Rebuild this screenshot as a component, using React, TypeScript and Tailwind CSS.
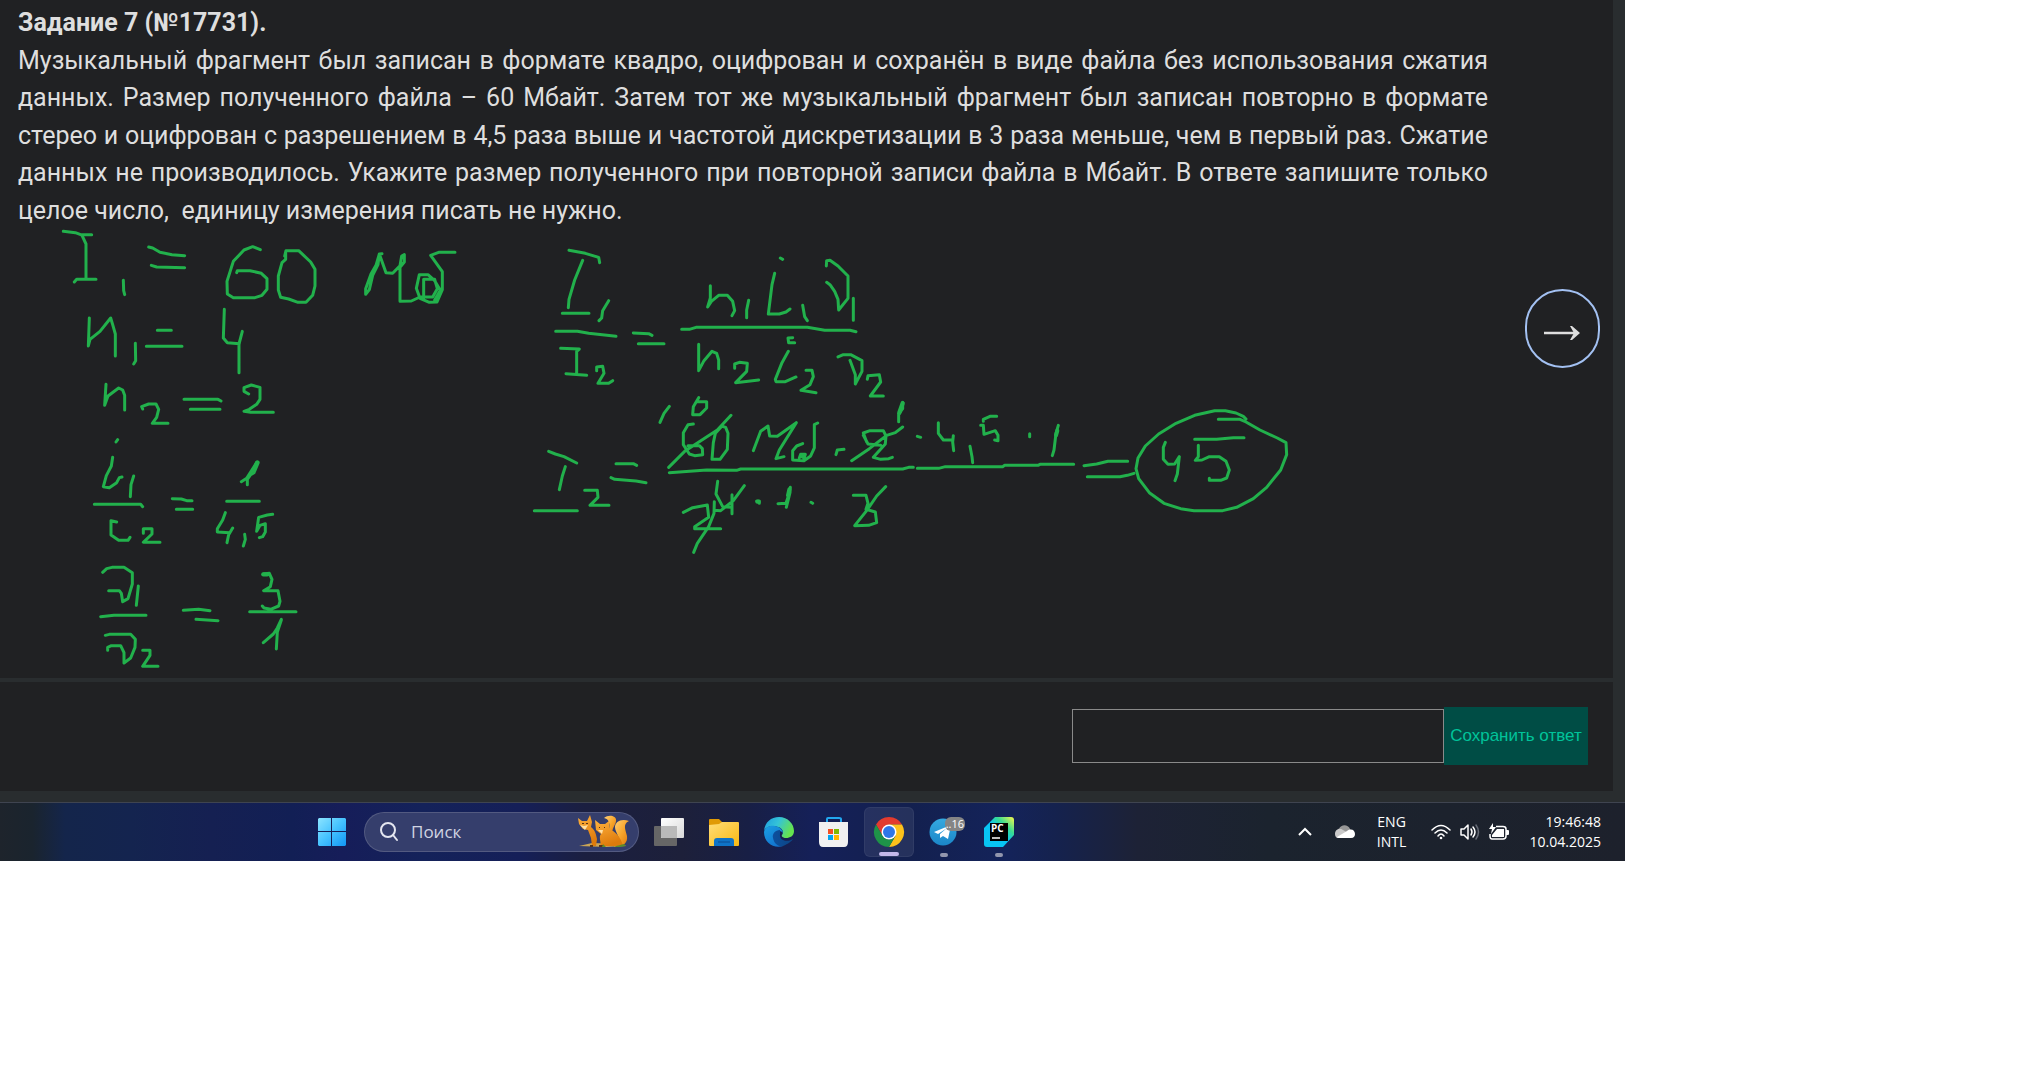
import React from "react";

const Stroke = ({ d, w = 3 }: { d: string; w?: number }) => <path d={d} strokeWidth={w} />;

/* Groups are drawn in units of a third of a pixel. */
function Ink() {
  return (
    <svg
      aria-hidden="true"
      className="pointer-events-none absolute left-0 top-0 h-[678px] w-[1613px]"
      viewBox="0 0 1613 678"
      fill="none"
      stroke="#22b14c"
      strokeLinecap="round"
      strokeLinejoin="round"
    >
      <g transform="translate(40 220) scale(.33333)">
        <Stroke w={9} d="M70 34L106 38L122 44H155M126 46L138 72V178M103 186L110 178H168M250 181L251 212L254 224M326 81L338 84L360 97L396 104L434 107M334 136L350 141L434 143" />
        <Stroke w={9} d="M661 89L638 80L612 90L580 124L561 184L562 222L580 233H645L666 226L681 208V176L664 160L630 152H592L590 158" />
        <Stroke w={9} d="M734 108L738 92H776L812 126L825 148V198L818 226L798 247H774L746 237L722 232L715 210V168L726 128L737 118V98" />
        <Stroke w={9} d="M1026 101L1018 102L1008 136L993 162L977 206V223L988 209L998 166L1014 134L1018 102L1038 158L1058 160L1080 137L1085 108L1093 104V126L1080 142V244L1114 243L1140 231H1178L1192 206L1184 178H1151V234M1245 97H1196L1172 106L1207 155V209L1191 246L1168 247L1140 235L1129 205L1138 164H1164L1184 182L1201 211L1184 240" />
        <Stroke w={9} d="M148 294L145 378L150 358L180 334L212 294L218 314L226 342V408M352 331H394M319 379H426M286 370L287 422L281 432M553 268L550 354L562 368L598 371M607 334L597 372V458" />
        <Stroke w={9} d="M198 493L194 556L204 528L236 504L248 510L254 526V570M308 567L305 560L326 552H348L356 568L350 592L337 610H384M432 538H534L543 543M451 568H540M626 522L612 514V503L634 495L660 502V538L650 553L628 568L612 574L632 577H700M228 666L233 659" />
      </g>
      <g transform="translate(40 430) scale(.33333)">
        <Stroke w={9} d="M218 82L214 108L199 137L190 170L208 173L230 158L238 143L246 141M281 138L273 164L271 200M163 223H302L308 230M230 276L213 272V315L236 331H264L270 322M310 310V296H336V312L310 337H360M397 206L424 207L440 212H456M409 238H458" />
        <Stroke w={9} d="M604 155L620 145L650 98M642 128L632 134L622 148V164" />
        <Stroke w={14} d="M652 98L642 122" />
        <Stroke w={9} d="M560 214H658M556 248L548 270L532 296V306L569 308M578 294L566 314L561 338M614 313L616 328L610 348M698 253L682 255L656 262L650 304L660 286L676 281V306L668 320L658 323M188 427L200 416L216 412H252L277 428V462L264 506L248 515L244 490L238 482H206M295 468L289 526M182 560L222 556H318M196 616L208 613H272L286 628L285 652L272 684L252 699V668L242 647H214L203 652V661M308 661H330V676L308 709H354" />
        <Stroke w={9} d="M430 541L476 538L510 542M468 568L534 572M670 432L688 430L696 448L691 470L671 482H714L720 514L716 528L692 538L672 534L667 528M629 545H768M670 638L700 612L712 594L724 568M724 570L712 606L709 657" />
        <Stroke w={13} d="M670 433H682" />
      </g>
      <g transform="translate(520 230) scale(.33333)">
        <Stroke w={9} d="M147 61L196 70L236 82L239 98M188 91L164 150L147 208L145 233M127 250H207M266 212L248 242L245 264L237 272M107 304H172L206 310L288 319M122 355L178 357L170 364V432M138 431L200 436M230 422V411L248 409L252 430L234 460H266L278 452M340 309L386 311L396 316M355 341H432" />
        <Stroke w={9} d="M571 167V204L563 231L574 214L596 196H622L638 214L644 242L636 257M686 211L680 240V263M764 130L756 164L745 252H778L798 246L810 237M781 84L788 88M848 226L854 260L862 272M919 108L920 92L930 91L954 108L984 138V205L956 240L954 208L944 184L930 164L920 157M1000 205V271M485 298H508L528 292H862L914 301H990L1008 305" />
        <Stroke w={9} d="M536 343V422L552 392L576 364L590 370L596 390V416M644 415V402L658 397L682 400L680 424L647 458L716 450M818 323L804 324L806 338H824M805 364L786 398L766 448L768 455H796L828 441M858 421H876L880 440L870 464L843 481L888 488M954 381L970 374H992L1026 392V424L1006 462V434L990 391M1042 448L1044 437L1078 434L1082 456L1051 498H1090" />
        <Stroke w={9} d="M448 529L432 550L420 577M536 503L520 530L518 554H540L560 534V515H530M520 582L504 584L490 608V644L508 672L524 677L548 674L547 656L538 647H504M446 712L494 664L592 600L633 556M604 590L586 610L580 638L576 688H600L622 658L624 610L617 592L604 588M700 662L722 604L744 588L749 618L772 619L829 578L778 660L768 686L792 680M893 579L883 584V654L872 678L852 692L818 690V662L830 648L848 641M838 684L842 673H856L852 686M948 674L952 660L972 658" />
        <Stroke w={9} d="M1040 636L1030 609L1050 602H1090L1098 618L1096 642L1060 682L1082 688L1106 686L1117 682M1030 616L1044 642L1082 646M995 692L1048 656L1100 616L1126 608L1148 591M448 728L560 720L650 721L662 717H1148L1166 712H1180M1148 517V536L1136 552V575" />
        <Stroke w={13} d="M1148 520L1138 548" />
        <Stroke w={9} d="M86 664L106 672L132 680L170 699M136 710L127 738L118 779M43 842H172M194 781H232L234 802L210 826H267M288 701H340L350 706M273 743L284 748L348 753L378 758" />
        <Stroke w={9} d="M490 847L518 833L562 825L566 862L524 890V896H602M583 815L582 850L566 890L532 940L521 967M593 754L588 792L608 830L634 832M636 794V851M583 841L602 842L640 812L673 767M710 813H718V820M774 821L798 820L806 796L811 772L810 788L799 832M873 817L878 820M1000 796H1038L1044 820L1038 838L1066 846L1070 878L1046 886L1004 887L1040 842L1070 798L1097 770" />
        <Stroke w={12} d="M712 815H716M808 778L804 796M848 680H852" />
      </g>
      <g transform="translate(880 380) scale(.33333)">
        <Stroke w={9} d="M112 169L122 172M175 128V160L190 180H217M220 167L218 186L221 212M270 199L276 230L278 248M350 109H330L310 118V124M302 136H310L312 163L346 152L354 166V182L344 180M449 161V170M535 136L528 160L522 210L517 227M112 265H176L196 260H368L374 256H474L480 253H581M612 257L650 252L684 244H743M622 290H720L742 286L762 280" />
        <Stroke w={12} d="M532 152L528 166" />
        <Stroke w={9} d="M1015 118H1080L1098 126L1140 150L1192 174L1218 188L1220 224L1202 270L1160 322L1120 356L1070 382L1028 392H942L902 386L852 370L808 338L776 296L768 266L774 234L796 198L836 162L888 130L944 106L1004 92H1036L1068 99L1090 109L1098 117M856 187L850 202V238L864 253L884 252L898 230L892 282L885 302M944 178L1010 178L1060 173H1092M955 196V230L946 241L966 240L988 230H1018L1038 244L1048 270L1040 294L1022 301H988V295" />
      </g>
    </svg>
  );
}

const Win = () => (
  <svg width="30" height="30" viewBox="0 0 30 30">
    <defs>
      <linearGradient id="win" x1="0" y1="0" x2="1" y2="1"><stop stopColor="#8ce4ff" /><stop offset=".5" stopColor="#45c2ff" /><stop offset="1" stopColor="#1195f5" /></linearGradient>
    </defs>
    <path fill="url(#win)" d="M2 1H14V14H1V2ZM15 1H28L29 2V14H15ZM1 15H14V29H2L1 28ZM15 15H29V28L28 29H15Z" />
  </svg>
);

const Foxes = () => (
  <svg width="52" height="34" viewBox="0 0 52 34">
    <defs>
      <linearGradient id="tail" x2="1" y2="1"><stop stopColor="#ffd27a" /><stop offset=".5" stopColor="#f8a62c" /><stop offset="1" stopColor="#dc7408" /></linearGradient>
      <linearGradient id="fur" x2=".4" y2="1"><stop stopColor="#ffb23e" /><stop offset="1" stopColor="#de7b0c" /></linearGradient>
    </defs>
    <path fill="#c9a455" d="M1 31L14 28L44 29L48 31L28 32Z" />
    <path fill="url(#tail)" d="M26 3C31 -1 39 1 38 6C38 9 35 11 34 18L30 20C31 13 34 5 26 3Z" />
    <path fill="url(#fur)" d="M0 3L4 6L9 6L12 0L14 7L13 12C17 15 18 19 19 24L18 31H14L13 23L10 15L5 14L1 9Z" />
    <path fill="url(#tail)" d="M51 6C43 3 37 7 37 12C37 18 44 23 39 28L36 32C45 32 50 28 49 21C48 16 44 9 51 6Z" />
    <path fill="url(#fur)" d="M17 5L22 9L27 9L31 6L31 14C37 16 43 22 45 31H22C24 28 20 22 23 19L18 15Z" />
    <path fill="#ffe0a5" d="M2 10L6 11L10 10L7 15ZM20 15L25 15L24 19Z" />
    <path fill="#5a3315" d="M4 8H6V9H4ZM8 8H10V9H8ZM21 12H22V13H21ZM26 12H27V13H26ZM12 30H15V32H12ZM21 30H25V32H21Z" />
    <path fill="#5e8c2a" d="M36 32C40 30 43 30 46 29L48 31L42 32ZM24 32L25 29L28 32Z" />
  </svg>
);

const TaskView = () => (
  <svg width="32" height="32" viewBox="0 0 32 32">
    <defs><linearGradient id="tv" x2="1" y2="1"><stop stopColor="#fff" /><stop offset="1" stopColor="#d8d8d8" /></linearGradient></defs>
    <rect x="1" y="10" width="23" height="20" rx="1" fill="#666" />
    <rect x="8" y="2" width="23" height="20" rx="1" fill="url(#tv)" />
    <path d="M8 10H24V22H9L8 21Z" fill="#b9b9b9" />
  </svg>
);

const Folder = () => (
  <svg width="32" height="32" viewBox="0 0 32 32">
    <defs>
      <linearGradient id="fo" x2="1" y2="1"><stop stopColor="#ffdd78" /><stop offset="1" stopColor="#f9b912" /></linearGradient>
    </defs>
    <path d="M1 4Q1 3 2 3H11L14 6H18V12H1Z" fill="#e09a05" />
    <path d="M1 9L11 8L14 6H30Q31 6 31 7V29Q31 30 30 30H2Q1 30 1 29Z" fill="url(#fo)" />
    <path d="M6 30V25Q6 22 9 22H23Q26 22 26 25V30Z" fill="#0f73c6" />
    <path d="M10 26H22" stroke="#0a4d92" />
  </svg>
);

const Edge = () => (
  <svg width="32" height="32" viewBox="0 0 32 32">
    <defs>
      <linearGradient id="e1" x2="1" y2=".4"><stop stopColor="#1c9de0" /><stop offset=".5" stopColor="#35c3d8" /><stop offset="1" stopColor="#65e34f" /></linearGradient>
      <linearGradient id="e2" x2=".6" y2="1"><stop stopColor="#1ba0e2" /><stop offset="1" stopColor="#1273cf" /></linearGradient>
      <linearGradient id="e3" x2="1"><stop stopColor="#0d4f9d" /><stop offset="1" stopColor="#0b4584" /></linearGradient>
    </defs>
    <path fill="url(#e1)" d="M1 15C2 6 8 1 16 1C25 1 31 8 31 15C31 20 27 22 23 22C20 22 18 20 19 19C21 17 20 12 15 11C10 9 3 10 1 15Z" />
    <path fill="url(#e2)" d="M1 16C2 11 7 9 12 10C17 11 20 14 20 17C18 14 13 15 12 20C11 25 15 30 20 30C11 33 1 27 1 16Z" />
    <path fill="url(#e3)" d="M17 14C12 14 9 18 10 22C11 28 16 31 20 30C25 28 29 25 30 23C23 27 16 24 17 18Z" />
  </svg>
);

const Store = () => (
  <svg width="32" height="32" viewBox="0 0 32 32">
    <path d="M9 7V3Q9 2 10 2H21Q23 2 23 3V7" fill="none" stroke="#22a7ef" strokeWidth="2" />
    <path d="M1 6H30V26Q30 31 26 31H5Q1 31 1 26Z" fill="#f1f1f1" />
    <path d="M10 13H15V18H10Z" fill="#f25022" /><path d="M16 13H21V18H16Z" fill="#7fba00" />
    <path d="M10 19H15V24H10Z" fill="#00a4ef" /><path d="M16 19H21V24H16Z" fill="#ffb900" />
  </svg>
);

const Chrome = () => (
  <svg width="32" height="32" viewBox="0 0 32 32">
    <path fill="#e33b2e" d="M3 8.500A15 15 0 0 1 29 8.500H16L9.500 19.700Z" />
    <path fill="#fcc21b" d="M29 8.500A15 15 0 0 1 16 31L22.500 19.700L16 8.500Z" />
    <path fill="#1e9348" d="M16 31A15 15 0 0 1 3 8.500L9.500 19.700A7.500 7.500 0 0 0 22.500 19.700Z" />
    <circle cx="16" cy="16" r="7.500" fill="#fff" /><circle cx="16" cy="16" r="6" fill="#2f76e8" />
  </svg>
);

const Telegram = () => (
  <svg width="32" height="32" viewBox="0 0 32 32">
    <defs><linearGradient id="tg" x2="0" y2="1"><stop stopColor="#35a9e0" /><stop offset="1" stopColor="#1b86c8" /></linearGradient></defs>
    <circle cx="15" cy="16" r="13.500" fill="url(#tg)" />
    <path fill="#fff" d="M6 16L23 9L20 23L15 20L12 22L12 18L19 12L10 18Z" />
  </svg>
);

const PyCharm = () => (
  <svg width="32" height="32" viewBox="0 0 32 32">
    <defs><linearGradient id="pc" x1="0" y1="1" x2="1" y2="0"><stop offset=".5" stopColor="#08c5f4" /><stop offset=".72" stopColor="#3bdc90" /><stop offset="1" stopColor="#fcf84a" /></linearGradient></defs>
    <path fill="url(#pc)" d="M12 1H28Q31 1 31 4V19L20 31H4Q1 31 1 28V12Z" />
    <path d="M7 7H25V25H7Z" fill="#000" />
    <text x="8" y="16" fill="#fff" fontSize="10" fontWeight="700" fontFamily="Open Sans, sans-serif">PC</text>
    <path d="M9 22H17" stroke="#fff" strokeWidth="1.500" />
  </svg>
);

const SystemIcon = ({ label, children }: { label: string; children: React.ReactNode }) => (
  <button aria-label={label} className="flex items-center justify-center">{children}</button>
);

function AppButton({ label, mark, active, children }: { label: string; mark?: string; active?: boolean; children: React.ReactNode }) {
  return (
    <button
      aria-label={label}
      className={"relative flex h-[50px] w-[50px] items-center justify-center rounded-md " + (active ? "border border-white/5 bg-white/8" : "")}
    >
      {children}
      {mark && <span className={"absolute bottom-0 h-1 rounded-full " + mark} />}
    </button>
  );
}

function Taskbar() {
  return (
    <footer className="flex h-[59px] items-center border-t border-[#3f4450] bg-[linear-gradient(90deg,#1e242c_0%,#1a242e_2%,#14254b_4%,#14244f_8%,#152052_13%,#121f55_18%,#161d59_21%,#14225a_26%,#151f58_32%,#1b1f40_36%,#1d203a_42%,#181f45_46%,#152058_50%,#13204f_56%,#14235a_62%,#15224e_65%,#1d2236_70%,#1b232e_78%,#1d212c_100%)] pl-[310px] pr-6 font-['Open_Sans',sans-serif] text-white">
      <button aria-label="Пуск" className="mr-[10px] flex w-[44px] justify-center"><Win /></button>
      <label className="mr-[5px] flex h-10 w-[275px] items-center rounded-full border border-white/15 bg-[#353e6c] pl-[14px] pr-2">
        <svg width="20" height="20" viewBox="0 0 20 20" fill="none" stroke="#e4e6f0" strokeWidth="2" strokeLinecap="round"><circle cx="9" cy="8" r="7" /><path d="M14 13L18 18" /></svg>
        <input placeholder="Поиск" className="ml-3 w-0 flex-1 bg-transparent text-[17px] text-white outline-none placeholder:text-[#d0d4e2]" />
        <Foxes />
      </label>
      <div className="flex items-center gap-[5px]">
        <AppButton label="Представление задач"><TaskView /></AppButton>
        <AppButton label="Проводник"><Folder /></AppButton>
        <AppButton label="Edge"><Edge /></AppButton>
        <AppButton label="Store"><Store /></AppButton>
        <AppButton label="Chrome" active mark="w-5 bg-[#c3b8ea]"><Chrome /></AppButton>
        <AppButton label="Telegram" mark="w-2 bg-[#9296ad]">
          <Telegram />
          <span className="absolute right-1 top-[10px] rounded-md bg-[#858585] px-[1px] text-[11px] leading-[14px]">..16</span>
        </AppButton>
        <AppButton label="PyCharm" mark="w-2 bg-[#9296ad]"><PyCharm /></AppButton>
      </div>
      <div className="ml-auto flex items-center">
        <SystemIcon label="Скрытые значки"><svg width="16" height="10" viewBox="0 0 16 10" fill="none" stroke="#fff" strokeWidth="2"><path d="M2 8L8 2L14 8" /></svg></SystemIcon>
        <span className="w-[21px]" />
        <SystemIcon label="OneDrive">
          <svg width="22" height="16" viewBox="0 0 22 16"><path fill="#969696" d="M5 5C7 0 14 0 16 5L18 9L6 8Z" /><path fill="#c9c9c9" d="M1 10C1 6 5 3 9 6L16 10L6 14H4C2 14 1 12 1 10Z" /><path fill="#fff" d="M3 13L13 7C17 4 21 6 21 10C21 12 20 14 17 14H5Q3 14 3 13Z" /></svg>
        </SystemIcon>
        <button className="ml-[18px] w-[36px] text-center text-[14px] leading-5">ENG<br />INTL</button>
        <div className="ml-5 flex items-center gap-[7px]">
          <SystemIcon label="Сеть">
            <svg width="22" height="18" viewBox="0 0 22 18" fill="none" stroke="#fff" strokeWidth="1.500" strokeLinecap="round"><path d="M2 7Q11-2 20 7M5 10Q11 4 17 10M8 13Q11 9 14 13" /><circle cx="11" cy="15" r="1.300" fill="#fff" stroke="none" /></svg>
          </SystemIcon>
          <SystemIcon label="Громкость">
            <svg width="22" height="18" viewBox="0 0 22 18" fill="none" stroke="#fff" strokeWidth="1.500" strokeLinejoin="round" strokeLinecap="round"><path d="M2 6H5L9 2V16L5 12H2ZM12 6Q14 9 12 12M14 4Q18 9 14 14" /><path stroke="#666b76" d="M17 2Q22 9 17 16" /></svg>
          </SystemIcon>
          <SystemIcon label="Батарея">
            <svg width="22" height="18" viewBox="0 0 22 18"><path d="M8 3.500H15Q18 3.500 18 6V13Q18 16 15 16H4Q2 16 2 13V11" fill="none" stroke="#fff" strokeWidth="1.500" /><path fill="#fff" d="M9 6H16V14H4V12ZM18 7H20Q21 7 21 8V11Q21 12 20 12H18ZM5 0L1 6H4L3 11L8 4H5Z" /></svg>
          </SystemIcon>
        </div>
        <button className="ml-5 text-right text-[14px] leading-5">19:46:48<br />10.04.2025</button>
      </div>
    </footer>
  );
}

export default function App() {
  return (
    <div className="min-h-screen bg-white">
      <div className="w-[79.5%] bg-[#292d2f]">
        <main className="mr-3 pb-[11px]">
          <section className="relative h-[678px] bg-[#202123] pl-[18px] pr-[125px] font-[Roboto,sans-serif] text-[#dedede]">
            <h1 className="pt-1 text-[25px] font-bold leading-normal">Задание 7 (№17731).</h1>
            <p className="whitespace-pre-wrap text-justify text-[25px] leading-normal">
              Музыкальный фрагмент был записан в формате квадро, оцифрован и сохранён в виде файла без использования сжатия данных. Размер полученного файла – 60 Мбайт. Затем тот же музыкальный фрагмент был записан повторно в формате стерео и оцифрован с разрешением в 4,5 раза выше и частотой дискретизации в 3 раза меньше, чем в первый раз. Сжатие данных не производилось. Укажите размер полученного при повторной записи файла в Мбайт. В ответе запишите только целое число,&nbsp; единицу измерения писать не нужно.
            </p>
            <Ink />
            <button aria-label="Далее" className="absolute right-[13px] top-[289px] flex h-[79px] w-[75px] items-center justify-center rounded-full border-2 border-[#a3c1f2] pt-2">
              <svg width="36" height="16" viewBox="0 0 36 16" fill="none" stroke="#dedede" strokeWidth="2.500"><path d="M0 8H32" /><path fill="#dedede" stroke="none" d="M26 1H28L36 8L28 15H26L30 8Z" /></svg>
            </button>
          </section>
          <form className="mt-1 flex h-[109px] items-center justify-end bg-[#202123] pb-[2px] pr-[25px]">
            <input aria-label="Ответ" className="h-[54px] w-[372px] border border-[#8a8a8a] bg-transparent px-3 text-xl text-white outline-none" />
            <button type="button" className="h-[58px] w-[144px] bg-[#004d45] text-center font-['Liberation_Sans',sans-serif] text-[17px] text-[#00c39a]">Сохранить ответ</button>
          </form>
        </main>
        <Taskbar />
      </div>
    </div>
  );
}
